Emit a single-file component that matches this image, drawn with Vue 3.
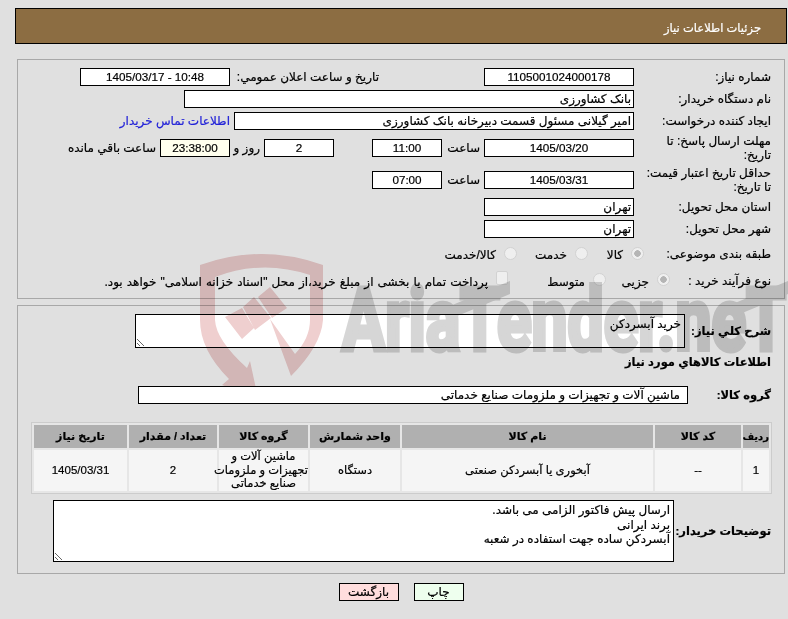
<script setup>
const cols = [
  { title: 'ردیف', w: 26, val: '1' },
  { title: 'کد کالا', w: 86, val: '--' },
  { title: 'نام کالا', w: 251, val: 'آبخوری یا آبسردکن صنعتی' },
  { title: 'واحد شمارش', w: 90, val: 'دستگاه' },
  { title: 'گروه کالا', w: 89, val: 'ماشین آلات و\nتجهیزات و ملزومات\nصنایع خدماتی' },
  { title: 'تعداد / مقدار', w: 88, val: '2' },
  { title: 'تاریخ نیاز', w: 93, val: '1405/03/31' }
]
const notes = 'ارسال پیش فاکتور الزامی می باشد.\nبرند ایرانی\nآبسردکن ساده جهت استفاده در شعبه'
</script>

<template>
  <div class="page">
    <div class="head">جزئیات اطلاعات نیاز</div>

    <div class="panel top">
      <div class="row">
        <div class="lbl">شماره نیاز:</div>
        <div class="box w150 center">1105001024000178</div>
        <div class="announce">تاريخ و ساعت اعلان عمومي:</div>
        <div class="box w150 center" dir="ltr">1405/03/17 - 10:48</div>
      </div>
      <div class="row">
        <div class="lbl">نام دستگاه خریدار:</div>
        <div class="box w450">بانک کشاورزی</div>
      </div>
      <div class="row">
        <div class="lbl">ایجاد کننده درخواست:</div>
        <div class="box w400">امیر گیلانی مسئول قسمت دبیرخانه بانک کشاورزی</div>
        <a class="link">اطلاعات تماس خریدار</a>
      </div>
      <div class="row tall">
        <div class="lbl">مهلت ارسال پاسخ: تا<br />تاریخ:</div>
        <div class="box w150 center">1405/03/20</div>
        <div class="unit hour">ساعت</div>
        <div class="box w70 center">11:00</div>
        <div class="box w70 center day">2</div>
        <div class="unit and">روز و</div>
        <div class="box w70 center cream">23:38:00</div>
        <div class="unit">ساعت باقي مانده</div>
      </div>
      <div class="row tall">
        <div class="lbl">حداقل تاریخ اعتبار قیمت:<br />تا تاریخ:</div>
        <div class="box w150 center">1405/03/31</div>
        <div class="unit hour">ساعت</div>
        <div class="box w70 center">07:00</div>
      </div>
      <div class="row">
        <div class="lbl">استان محل تحویل:</div>
        <div class="box w150">تهران</div>
      </div>
      <div class="row">
        <div class="lbl">شهر محل تحویل:</div>
        <div class="box w150">تهران</div>
      </div>
      <div class="row choice subject">
        <div class="lbl subject-lbl">طبقه بندی موضوعی:</div>
        <input type="radio" disabled checked />
        <span class="opt o1">کالا</span>
        <input type="radio" disabled />
        <span class="opt o2">خدمت</span>
        <input type="radio" disabled />
        <span class="opt">کالا/خدمت</span>
      </div>
      <div class="row choice process">
        <div class="lbl short">نوع فرآیند خرید :</div>
        <input type="radio" disabled checked />
        <span class="opt o3">جزیی</span>
        <input type="radio" disabled />
        <span class="opt o4">متوسط</span>
        <input type="checkbox" disabled />
        <span class="opt long">پرداخت تمام یا بخشی از مبلغ خرید،از محل "اسناد خزانه اسلامی" خواهد بود.</span>
      </div>
    </div>

    <div class="panel bottom">
      <div class="row summary">
        <div class="lbl bold">شرح كلي نياز:</div>
        <textarea class="area" readonly>خرید آبسردکن</textarea>
      </div>
      <div class="title bold">اطلاعات كالاهاي مورد نياز</div>
      <div class="row group">
        <div class="lbl bold">گروه کالا:</div>
        <div class="box w550">ماشین آلات و تجهیزات و ملزومات صنایع خدماتی</div>
      </div>
      <table class="goods">
        <colgroup>
          <col v-for="c in cols" :key="c.title" :style="{ width: c.w + 'px' }" />
        </colgroup>
        <thead>
          <tr><th v-for="c in cols" :key="c.title">{{ c.title }}</th></tr>
        </thead>
        <tbody>
          <tr><td v-for="c in cols" :key="c.title">{{ c.val }}</td></tr>
        </tbody>
      </table>
      <div class="row notes">
        <div class="lbl bold">توضیحات خریدار:</div>
        <textarea class="area" readonly :value="notes"></textarea>
      </div>
    </div>

    <div class="actions">
      <button class="btn print">چاپ</button>
      <button class="btn back">بازگشت</button>
    </div>

    <!-- the watermark lies over the form and stops at y=386 -->
    <svg class="watermark" width="788" height="386" viewBox="0 0 788 386">
      <g fill="#efcfcf">
        <path d="M200 265 Q262 243 323 265 L323 320 Q321 346 291 376 L270 319 L295 354 Q310 338 310 320 L310 275 Q262 259 215 277 L215 320 Q216 340 247 368 L250 361 L258 398 L222 385 L229 379 Q200 350 200 320 Z" />
        <path d="M225 317 L242 308 L254 328 L242 339 Z M243 307 L254 297 L271 318 L255 330 Z M258 297 L270 287 L287 308 L272 318 Z" />
      </g>
      <g fill="#d6d6d6">
        <text class="wm-text" x="342" y="350" font-size="88" textLength="444" lengthAdjust="spacingAndGlyphs" stroke="#d6d6d6" stroke-width="5">AriaTender.neT</text>
        <path d="M450 306 L510 281 L510 294 L450 319 Z M735 303 L788 281 L788 294 L735 316 Z" />
      </g>
    </svg>
  </div>
</template>

<style>
html, body {
  margin: 0;
  background: #e0e0e0;
}
</style>

<style scoped>
.page {
  position: relative;
  height: 619px;
  overflow: hidden;
  box-sizing: border-box;
  padding: 8px 1px 0 15px;
  direction: rtl;
  background: #e0e0e0;
  color: #000;
  font-family: "Liberation Sans", "DejaVu Sans", sans-serif;
  font-size: 12px;
  -webkit-text-stroke: 0.2px;
}
.watermark {
  position: absolute;
  left: 0;
  top: 0;
  pointer-events: none;
  mix-blend-mode: multiply;
}
.wm-text {
  font-family: Roboto, sans-serif;
  font-weight: 700;
  direction: ltr;
}
.head {
  height: 36px;
  box-sizing: border-box;
  border: 1px solid #000;
  background: #8c6d42;
  color: #fff;
  font-size: 11.5px;
  line-height: 34px;
  padding: 2px 25px 0 0;
}
.panel {
  box-sizing: border-box;
  margin: 0 2px;
  border: 1px solid #a8a8a8;
  padding-right: 13px;
}
.panel.top {
  margin-top: 15px;
  height: 240px;
  padding-top: 6px;
}
.panel.bottom {
  margin-top: 6px;
  height: 269px;
  padding-top: 8px;
}
.row {
  display: flex;
  align-items: center;
  height: 22px;
}
.row.tall {
  height: 32px;
}
.lbl {
  width: 137px;
  flex: none;
  line-height: 14.5px;
  white-space: nowrap;
}
.lbl.short {
  width: 101px;
}
.lbl.subject-lbl {
  width: 127px;
}
.bold {
  font-weight: 700;
  font-size: 11.5px;
}
.box {
  box-sizing: border-box;
  flex: none;
  height: 18px;
  line-height: 16px;
  border: 1px solid #000;
  background: #fff;
  padding: 0 2px;
  white-space: nowrap;
  overflow: hidden;
}
.center {
  text-align: center;
  font-size: 11.7px;
}
.cream {
  background: #ffffee;
}
.w70 {
  width: 70px;
}
.w150 {
  width: 150px;
}
.w400 {
  width: 400px;
}
.w450 {
  width: 450px;
}
.w550 {
  width: 550px;
  padding-right: 7px;
}
.announce {
  width: 149px;
  margin-right: 105px;
}
.link {
  margin-right: 4px;
  color: #2323d8;
}
.unit {
  margin-right: 4px;
  white-space: nowrap;
}
.hour {
  width: 38px;
}
.and {
  width: 30px;
}
.day {
  margin-right: 38px;
}
.choice input {
  appearance: none;
  flex: none;
  box-sizing: border-box;
  margin: 0;
  width: 13px;
  height: 13px;
  background: #efefef;
  border: 1px solid #d2d2d2;
  position: relative;
  top: -1px;
}
.choice input[type="radio"] {
  border-radius: 50%;
}
.choice input[type="radio"]:checked {
  background: radial-gradient(circle, #b5b5b5 0 3px, #efefef 3.5px);
}
.choice input[type="checkbox"] {
  border-radius: 2px;
  width: 12px;
  height: 14px;
  top: -3px;
}
.opt {
  flex: none;
  margin-right: 8px;
  white-space: nowrap;
  position: relative;
  top: 1px;
}
.long {
  word-spacing: 0.8px;
}
.subject {
  height: 28px;
}
.o1 {
  width: 35px;
}
.o2 {
  width: 50px;
}
.process {
  height: 26px;
}
.process input {
  top: -2px;
}
.o3 {
  width: 43px;
}
.o4 {
  width: 77px;
}
.summary {
  height: 34px;
}
.area {
  box-sizing: border-box;
  display: block;
  margin: 0;
  border: 1px solid #000;
  border-radius: 0;
  background: #fff;
  padding: 2px 3px;
  font: inherit;
  line-height: 14.5px;
  direction: rtl;
  outline: none;
}
.summary .lbl {
  width: 86px;
}
.summary .area {
  width: 550px;
  height: 34px;
}
.title {
  margin-top: 6px;
  height: 16px;
  line-height: 16px;
}
.group {
  margin-top: 16px;
  height: 18px;
}
.group .lbl {
  width: 83px;
}
.goods {
  margin: 18px 0 0 0;
  position: relative;
  left: 1px;
  width: 741px;
  height: 72px;
  box-sizing: border-box;
  table-layout: fixed;
  border-collapse: separate;
  border-spacing: 2px;
  border: 1px solid #cccccc;
  background: #e6e6e6;
}
.goods th {
  height: 23px;
  padding: 0;
  background: #b0b0b0;
  font-weight: 700;
  font-size: 11px;
  text-align: center;
}
.goods th:first-child {
  font-size: 10px;
}
.goods td {
  height: 41px;
  padding: 0;
  background: #f5f5f5;
  text-align: center;
  font-size: 11.5px;
  line-height: 13.5px;
  white-space: pre;
}
.notes {
  margin-top: 6px;
  height: 62px;
}
.notes .lbl {
  width: 97px;
}
.notes .area {
  width: 621px;
  height: 62px;
}
.actions {
  display: flex;
  justify-content: center;
  gap: 15px;
  margin-top: 9px;
}
.btn {
  box-sizing: border-box;
  height: 18px;
  padding: 0;
  border: 1px solid #000;
  font: inherit;
  color: #000;
}
.print {
  width: 50px;
  background: #eeffee;
}
.back {
  width: 60px;
  background: #ffdddd;
}
</style>
